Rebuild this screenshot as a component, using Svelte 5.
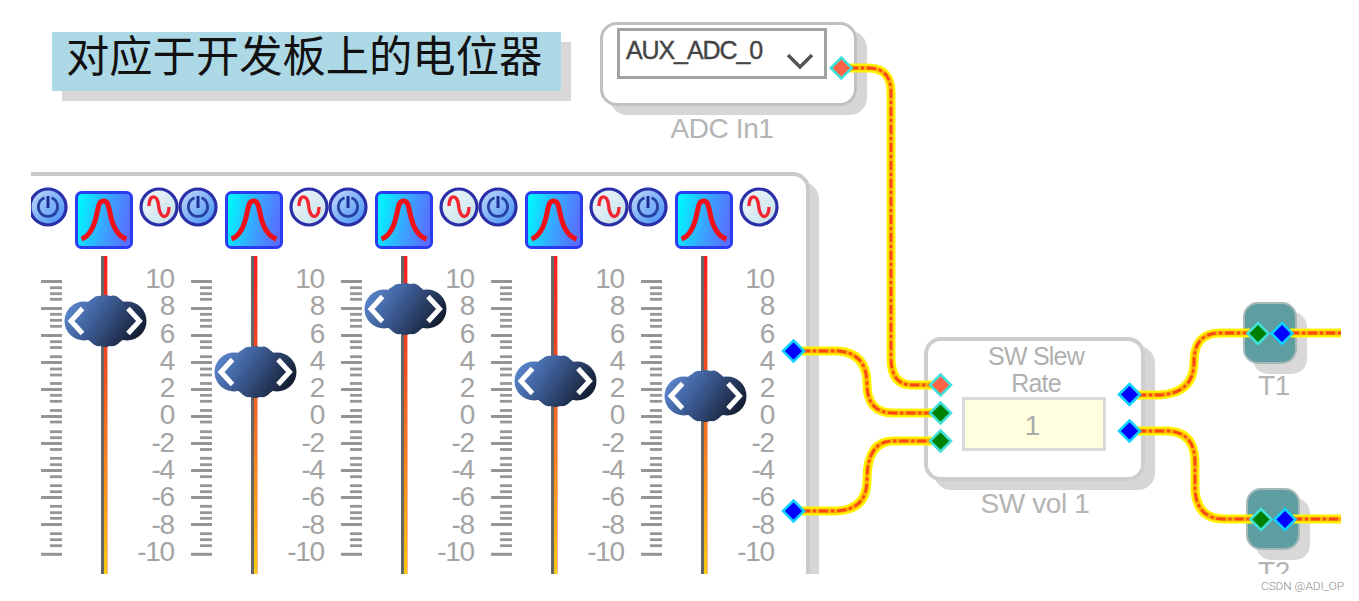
<script>
  const channels = [
    { id: 0, value: 7.1 },
    { id: 1, value: 3.35 },
    { id: 2, value: 7.98 },
    { id: 3, value: 2.7 },
    { id: 4, value: 1.6 }
  ];

  const scaleLabels = [10, 8, 6, 4, 2, 0, -2, -4, -6, -8, -10];

  // tick offsets from the top of the fader
  const majorTicks = [25.5, 52.5, 79.5, 106.5, 133.5, 160.5, 187.5, 214.5, 241.5, 268.5, 298.3];
  const minorTicks = [
    31.7, 37.7, 43.3, 58.3, 64.3, 70.3, 85.7, 91.5, 100.7, 113, 119, 127.5, 139.3, 145.3, 154.5,
    166, 175.7, 181.7, 193.5, 202.3, 208.7, 220.7, 229.7, 235.7, 250.3, 256.7, 262.3, 277.7, 283.7, 289.7
  ];

  const wires = [
    'M849 68 H868 Q891 68 891 92 V358 Q891 385 912 385 H932',
    'M801 351 H838 Q867 353 867 384 Q867 413 893 413 H932',
    'M801 511 H836 Q867 510 867 480 Q867 441 893 441 H932',
    'M1137 395 H1160 Q1194 393 1194 362 Q1194 333 1220 333 H1250',
    'M1137 431 H1169 Q1195 433 1195 462 V490 Q1197 519 1224 519 H1253',
    'M1290 333 H1345',
    'M1293 519 H1345'
  ];

  const pins = [
    { x: 841.3, y: 68, type: 'control' },
    { x: 793.5, y: 351, type: 'out' },
    { x: 793.5, y: 511, type: 'out' },
    { x: 940.5, y: 385, type: 'control' },
    { x: 940.5, y: 413, type: 'in' },
    { x: 940.5, y: 441, type: 'in' },
    { x: 1129.5, y: 394.5, type: 'out' },
    { x: 1129.5, y: 431, type: 'out' },
    { x: 1258, y: 333.5, type: 'in' },
    { x: 1282, y: 333.5, type: 'out' },
    { x: 1261, y: 519.5, type: 'in' },
    { x: 1285, y: 519.5, type: 'out' }
  ];

  const knobTop = (v) => (10 - v) * 13.6 - 0.5;
</script>

<svg class="defs" width="0" height="0">
  <defs>
    <linearGradient id="power" x1="0" y1="0" x2="1" y2="1">
      <stop offset="0" stop-color="#c8dcfa" />
      <stop offset="0.5" stop-color="#82b4f8" />
      <stop offset="1" stop-color="#3c8cf4" />
    </linearGradient>
    <linearGradient id="wave" x1="0" y1="0" x2="1" y2="1">
      <stop offset="0" stop-color="#f2f8fa" />
      <stop offset="1" stop-color="#c2dfea" />
    </linearGradient>
    <linearGradient id="bell" x1="0" y1="0.3" x2="1" y2="0.5">
      <stop offset="0.05" stop-color="#00f4ff" />
      <stop offset="0.55" stop-color="#3aa4ff" />
      <stop offset="1" stop-color="#5a6cff" />
    </linearGradient>
    <linearGradient id="knob" gradientUnits="userSpaceOnUse" x1="8" y1="6" x2="72" y2="50">
      <stop offset="0" stop-color="#5b86cc" />
      <stop offset="0.35" stop-color="#3f609b" />
      <stop offset="0.65" stop-color="#2b4068" />
      <stop offset="1" stop-color="#10192b" />
    </linearGradient>
  </defs>
</svg>

<div class="canvas">
  <div class="comment">对应于开发板上的电位器</div>

  <div class="node adc">
    <div class="select">
      <span>AUX_ADC_0</span>
      <svg width="28" height="16" viewBox="0 0 28 16">
        <path d="M2 1 L14 13 L26 1" fill="none" stroke="#555" stroke-width="3.4" />
      </svg>
    </div>
  </div>
  <div class="caption adc-caption">ADC In1</div>

  <div class="mixer">
    {#each channels as ch (ch.id)}
      <div class="channel">
        <div class="icons">
          <svg width="40" height="40" viewBox="0 0 40 40">
            <circle cx="20" cy="20" r="18" fill="url(#power)" stroke="#2a2fa8" stroke-width="3.2" />
            <path d="M16.5 10.8 A9.6 9.6 0 1 0 23.5 10.8" fill="none" stroke="#2440a0" stroke-width="2.8" />
            <path d="M20 9 V21" stroke="#1e2f98" stroke-width="3" />
          </svg>
          <svg width="58" height="58" viewBox="0 0 58 58">
            <rect x="1.5" y="1.5" width="55" height="55" rx="5" fill="url(#bell)" stroke="#2a3cf0" stroke-width="3" />
            <path d="M6.5 48 C15 45 19.5 35 22 22 C24 12 25 10 28.5 10 C32 10 33 12 35 22 C37.5 35 42 45 51.5 48" fill="none" stroke="#f01018" stroke-width="5" />
          </svg>
          <svg width="40" height="40" viewBox="0 0 40 40">
            <circle cx="20" cy="20" r="18" fill="url(#wave)" stroke="#2a2fa8" stroke-width="3.2" />
            <path d="M10 19 C10 7 18.5 7 19.5 18 C20.5 33 30 33 30 20" fill="none" stroke="#f42430" stroke-width="3.4" />
          </svg>
        </div>
        <div class="fader">
          <svg class="ticks" width="21" height="310" viewBox="0 0 21 310">
            {#each majorTicks as y}
              <path d="M0 {y} H21" stroke="#949494" stroke-width="3" />
            {/each}
            {#each minorTicks as y}
              <path d="M9 {y} H21" stroke="#969696" stroke-width="2.8" />
            {/each}
          </svg>
          <div class="track"></div>
          <ul class="scale">
            {#each scaleLabels as label}
              <li>{label}</li>
            {/each}
          </ul>
          <svg class="knob" style="top: {knobTop(ch.value)}px" width="83" height="52" viewBox="0 0 83 52">
            <circle cx="20" cy="26" r="19.5" fill="url(#knob)" />
            <circle cx="63" cy="26" r="19.5" fill="url(#knob)" />
            <path d="M28 4 Q32 0 37 1 Q41 -1 46 1 Q52 -1 56 4 Q61 7 63 14 L66 26 L63 38 Q61 44 56 47 Q52 52 46 51 Q41 53 37 51 Q31 52 27 47 Q22 44 20 38 L17 26 L20 14 Q22 7 28 4 Z" fill="url(#knob)" />
            <path d="M18.5 13.5 L7 26 L18.5 38.5 M64 13.5 L75.5 26 L64 38.5" fill="none" stroke="#fff" stroke-width="5" />
          </svg>
        </div>
      </div>
    {/each}
  </div>

  <div class="node slew">
    <div class="title">SW Slew<br />Rate</div>
    <div class="field">1</div>
  </div>
  <div class="caption slew-caption">SW vol 1</div>

  <div class="terminal t1"></div>
  <div class="caption t1-caption">T1</div>
  <div class="terminal t2"></div>
  <div class="caption t2-caption">T2</div>

  <svg class="wires" width="1359" height="574" viewBox="0 0 1359 574">
    {#each wires as d}
      <path {d} class="wire outer" />
      <path {d} class="wire inner" />
      <path {d} class="wire dash" />
    {/each}
    {#each pins as p}
      <path class="pin {p.type}" d="M{p.x} {p.y - 10.5} l10.5 10.5 l-10.5 10.5 l-10.5 -10.5 z" />
    {/each}
  </svg>
</div>
<footer>CSDN @ADI_OP</footer>

<style>
  :global(body) {
    background: #fff;
    font-family: "Liberation Sans", Arial, sans-serif;
    overflow: hidden;
  }

  .defs { position: absolute; }

  .canvas {
    position: relative;
    width: 1359px;
    height: 574px;
    overflow: hidden;
    clip-path: inset(0 18px 0 31px);
  }

  .comment {
    position: absolute;
    left: 52px;
    top: 32px;
    width: 509px;
    height: 59px;
    box-sizing: border-box;
    padding-left: 14px;
    background: #add8e6;
    box-shadow: 10px 10px 0 #d8d8d8;
    color: #111;
    font: 43.3px/43px "Noto Sans CJK SC", sans-serif;
    white-space: nowrap;
  }

  .node {
    position: absolute;
    box-sizing: border-box;
    background: #fff;
    border: 3px solid #c0c0c0;
    border-radius: 17px;
    box-shadow: 10px 9px 0 #d6d6d6;
  }

  .adc {
    left: 600px;
    top: 22px;
    width: 257px;
    height: 84px;
    padding: 3px 0 0 14px;
  }
  .select {
    display: flex;
    justify-content: space-between;
    box-sizing: border-box;
    width: 210px;
    height: 51px;
    padding: 5px 10px 0 6px;
    border: 3px solid #a2a2a2;
    color: #444;
    font-size: 25px;
    line-height: 28px;
    letter-spacing: -1.1px;
    -webkit-text-stroke: 0.4px #444;
  }
  .select svg { margin-top: 18px; }

  .caption {
    position: absolute;
    width: 160px;
    text-align: center;
    color: #b4b4b4;
    font-size: 28px;
    line-height: 32px;
    letter-spacing: -0.4px;
  }
  .adc-caption { left: 642px; top: 113px; }
  .slew-caption { left: 955px; top: 488px; }
  .t1-caption { left: 1194px; top: 370px; }
  .t2-caption { left: 1194px; top: 556px; }

  .mixer {
    position: absolute;
    left: -20px;
    top: 172px;
    width: 830px;
    height: 440px;
    box-sizing: border-box;
    display: grid;
    grid-template-columns: repeat(5, 150px);
    padding: 11px 0 0 44px;
    background: #fff;
    border: 4px solid #cacaca;
    border-radius: 17px;
    box-shadow: 9px 10px 0 #d6d6d6;
  }
  .icons { display: flex; }
  .icons svg { flex: none; }
  .icons svg:nth-child(2) { margin: 4px 6px 0 7px; }

  .fader {
    position: relative;
    display: flex;
    margin-top: 7px;
    height: 330px;
  }
  .ticks { flex: none; margin-left: 13px; }
  .track {
    width: 3px;
    height: 330px;
    margin-left: 39px;
    border-left: 3px solid #666;
    border-right: 1px solid #ffb0a0;
    background: linear-gradient(#f81c24, #f05020 35%, #f58a1c 65%, #f2cc10 96%);
  }
  .scale {
    margin: 9px 4px 0 auto;
    padding: 0;
    list-style: none;
    text-align: right;
    color: #a4a4a4;
    font-size: 28px;
    line-height: 27.3px;
    letter-spacing: -1.2px;
  }
  .knob { position: absolute; left: 36px; }

  .slew {
    left: 924px;
    top: 337px;
    width: 221px;
    height: 144px;
    padding: 2px 0 0 34px;
    border: 4px solid #cecece;
  }
  .title {
    width: 148px;
    text-align: center;
    color: #b0b0b0;
    font-size: 25px;
    line-height: 27px;
    letter-spacing: -0.8px;
  }
  .field {
    box-sizing: border-box;
    width: 144px;
    height: 54px;
    border: 3px solid #dadada;
    background: #ffffe0;
    color: #aaa;
    text-align: center;
    font-size: 28px;
    line-height: 51px;
    text-indent: -3px;
  }

  .terminal {
    position: absolute;
    box-sizing: border-box;
    width: 54px;
    height: 62px;
    background: #5f9ea0;
    border: 2px solid #a6b8b8;
    border-radius: 15px;
    box-shadow: 10px 10px 0 #d8d8d8;
  }
  .t1 { left: 1243px; top: 302px; }
  .t2 { left: 1246px; top: 488px; }

  .wires { position: absolute; left: 0; top: 0; }
  .wire { fill: none; }
  .outer { stroke: #fff200; stroke-width: 9; }
  .inner { stroke: #ffb000; stroke-width: 4.6; }
  .dash { stroke: #fa4814; stroke-width: 2.8; stroke-dasharray: 9 3 3 3; }

  .pin { stroke-width: 2.6; stroke: #40e0d8; }
  .control { fill: #ff6347; }
  .in { fill: #008000; }
  .out { fill: #00f; stroke: #10d0ff; }

  footer {
    padding: 4px 15px 0 0;
    text-align: right;
    color: #8c8c8c;
    font: 300 11.8px/17px Roboto, sans-serif;
  }
</style>
